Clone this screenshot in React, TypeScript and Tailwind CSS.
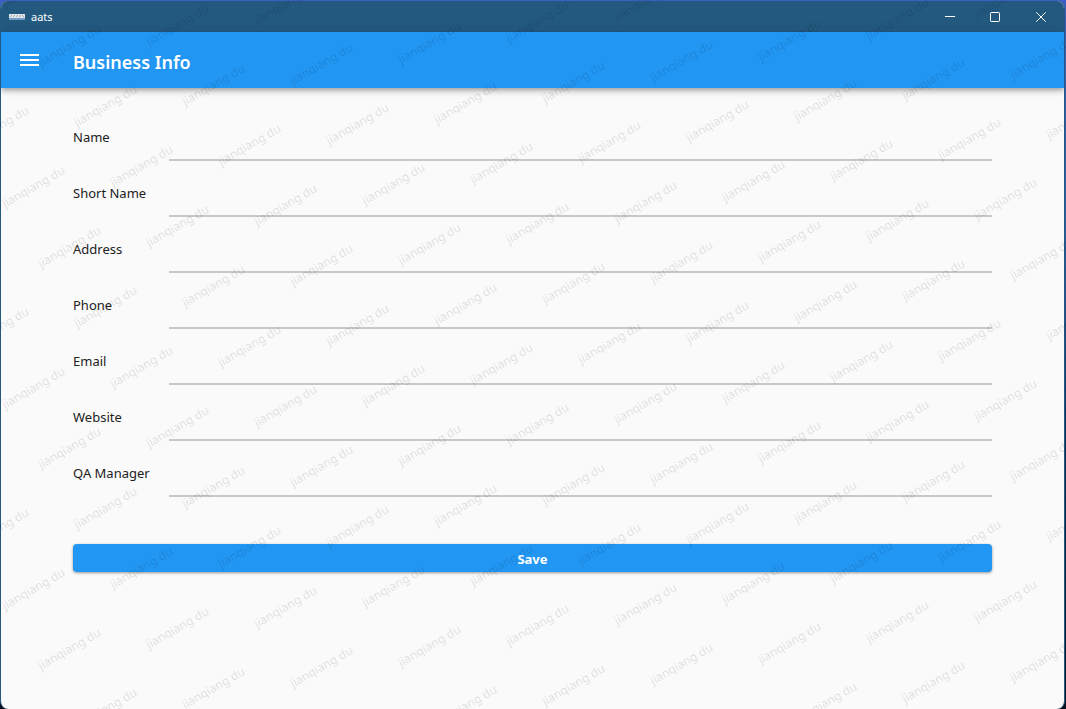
import React, { useEffect, useState } from "react";

const FIELDS = [
  { id: "name", label: "Name", type: "text" },
  { id: "short-name", label: "Short Name", type: "text" },
  { id: "address", label: "Address", type: "text" },
  { id: "phone", label: "Phone", type: "tel" },
  { id: "email", label: "Email", type: "email" },
  { id: "website", label: "Website", type: "url" },
  { id: "qa-manager", label: "QA Manager", type: "text" },
];

const WATERMARK = "jianqiang du";

// The watermark repeats on a slanted lattice: (36, 60) down, (108, -21) across.
function watermarkPoints(width: number, height: number) {
  const points: { x: number; y: number }[] = [];
  for (let across = -30; across <= 40; across++) {
    for (let down = -30; down <= 60; down++) {
      const x = 5 + across * 108 + down * 36;
      const y = 208 - across * 21 + down * 60;
      if (x > -56 && x < width - 4 && y > 6 && y < height + 30) points.push({ x, y });
    }
  }
  return points;
}

function useWindowSize() {
  const read = () => ({ width: window.innerWidth, height: window.innerHeight });
  const [size, setSize] = useState(read);
  useEffect(() => {
    const update = () => setSize(read());
    window.addEventListener("resize", update);
    return () => window.removeEventListener("resize", update);
  }, []);
  return size;
}

function Watermark() {
  const { width, height } = useWindowSize();
  return (
    <svg
      aria-hidden="true"
      className="pointer-events-none absolute inset-0 h-full w-full overflow-hidden font-['Noto_Sans',sans-serif] text-[12px] [text-rendering:geometricPrecision]"
    >
      {watermarkPoints(width, height).map(({ x, y }) => (
        <text key={`${x},${y}`} transform={`translate(${x} ${y}) rotate(-30)`} fill="#000" fillOpacity="0.12">
          {WATERMARK}
        </text>
      ))}
    </svg>
  );
}

function AppLogo() {
  return (
    <svg width="16" height="6" viewBox="0 0 16 6" aria-hidden="true" shapeRendering="crispEdges">
      <rect width="16" height="4" fill="#dfe4e9" />
      <rect y="4" width="16" height="2" fill="#6f9cc4" />
      <path
        d="M1 2.5h1M2 1.5h1M4 2.5h1M5 1.5h1M7 2.5h1M8 1.5h1M10 2.5h1M11 1.5h1M13 1.5h1M14 2.5h1"
        stroke="#a3adb6"
        strokeWidth="1"
      />
    </svg>
  );
}

function TitleBar() {
  return (
    <div className="flex h-[31px] items-center bg-[#23597f] text-white">
      <div className="flex flex-1 items-center gap-1.5 pl-2">
        <AppLogo />
        <span className="text-[11px] leading-4">aats</span>
      </div>
      <button type="button" aria-label="Minimize" className="flex h-full w-[45px] items-center justify-center">
        <svg width="10" height="10" viewBox="0 0 10 10" fill="none" stroke="currentColor">
          <path d="M0 4.5h10" />
        </svg>
      </button>
      <button type="button" aria-label="Maximize" className="flex h-full w-[46px] items-center justify-center">
        <svg width="10" height="10" viewBox="0 0 10 10" fill="none" stroke="currentColor">
          <rect x="0.5" y="0.5" width="9" height="9" rx="0.7" />
        </svg>
      </button>
      <button type="button" aria-label="Close" className="flex h-full w-[46px] items-center justify-center">
        <svg width="10" height="10" viewBox="0 0 10 10" fill="none" stroke="currentColor">
          <path d="M0.3 0.3l9.4 9.4M9.7 0.3l-9.4 9.4" />
        </svg>
      </button>
    </div>
  );
}

function AppBar() {
  return (
    <header className="flex h-14 items-center bg-[#2196f3] text-white shadow-[0_2px_4px_-1px_rgba(0,0,0,0.2),0_4px_5px_rgba(0,0,0,0.14),0_1px_10px_rgba(0,0,0,0.12)]">
      <button type="button" aria-label="Open menu" className="flex h-14 w-14 items-center justify-center">
        <svg width="19" height="12" viewBox="0 0 19 12" fill="currentColor" shapeRendering="crispEdges">
          <path d="M0 0h19v2H0zM0 5h19v2H0zM0 10h19v2H0z" />
        </svg>
      </button>
      <h1 className="ml-4 pt-1 text-lg leading-7 font-semibold">Business Info</h1>
    </header>
  );
}

export default function App() {
  return (
    <div className="relative flex min-h-screen flex-col overflow-hidden bg-[linear-gradient(to_bottom,#3b5fc4,#2f5fae_30%,#0b2f5c_60%,#0a1420)] pt-px pr-px font-['Noto_Sans','Open_Sans',sans-serif]">
      <div className="flex flex-1 flex-col overflow-hidden rounded-lg border border-y-0 border-[#23597f] bg-[#fafafa]">
        <TitleBar />
        <AppBar />
        <form className="px-[72px] pt-[25px] pb-16" onSubmit={(event) => event.preventDefault()}>
          <div className="flex flex-col gap-2">
            {FIELDS.map(({ id, label, type }) => (
              <div key={id} className="flex h-12">
                <label htmlFor={id} className="flex w-24 items-center pt-0.5 text-[13px] whitespace-nowrap text-[#212121]">
                  {label}
                </label>
                <input
                  id={id}
                  name={id}
                  type={type}
                  className="min-w-0 flex-1 border-b-2 border-[#c8c8c8] bg-transparent text-[13px] outline-none focus:border-[#2196f3]"
                />
              </div>
            ))}
          </div>
          <button
            type="submit"
            className="mt-[47px] flex h-7 w-full items-center justify-center rounded bg-[#2196f3] pt-1 text-[13px] font-bold text-white shadow-[0_1px_3px_rgba(0,0,0,0.4)]"
          >
            Save
          </button>
        </form>
      </div>
      <Watermark />
    </div>
  );
}
